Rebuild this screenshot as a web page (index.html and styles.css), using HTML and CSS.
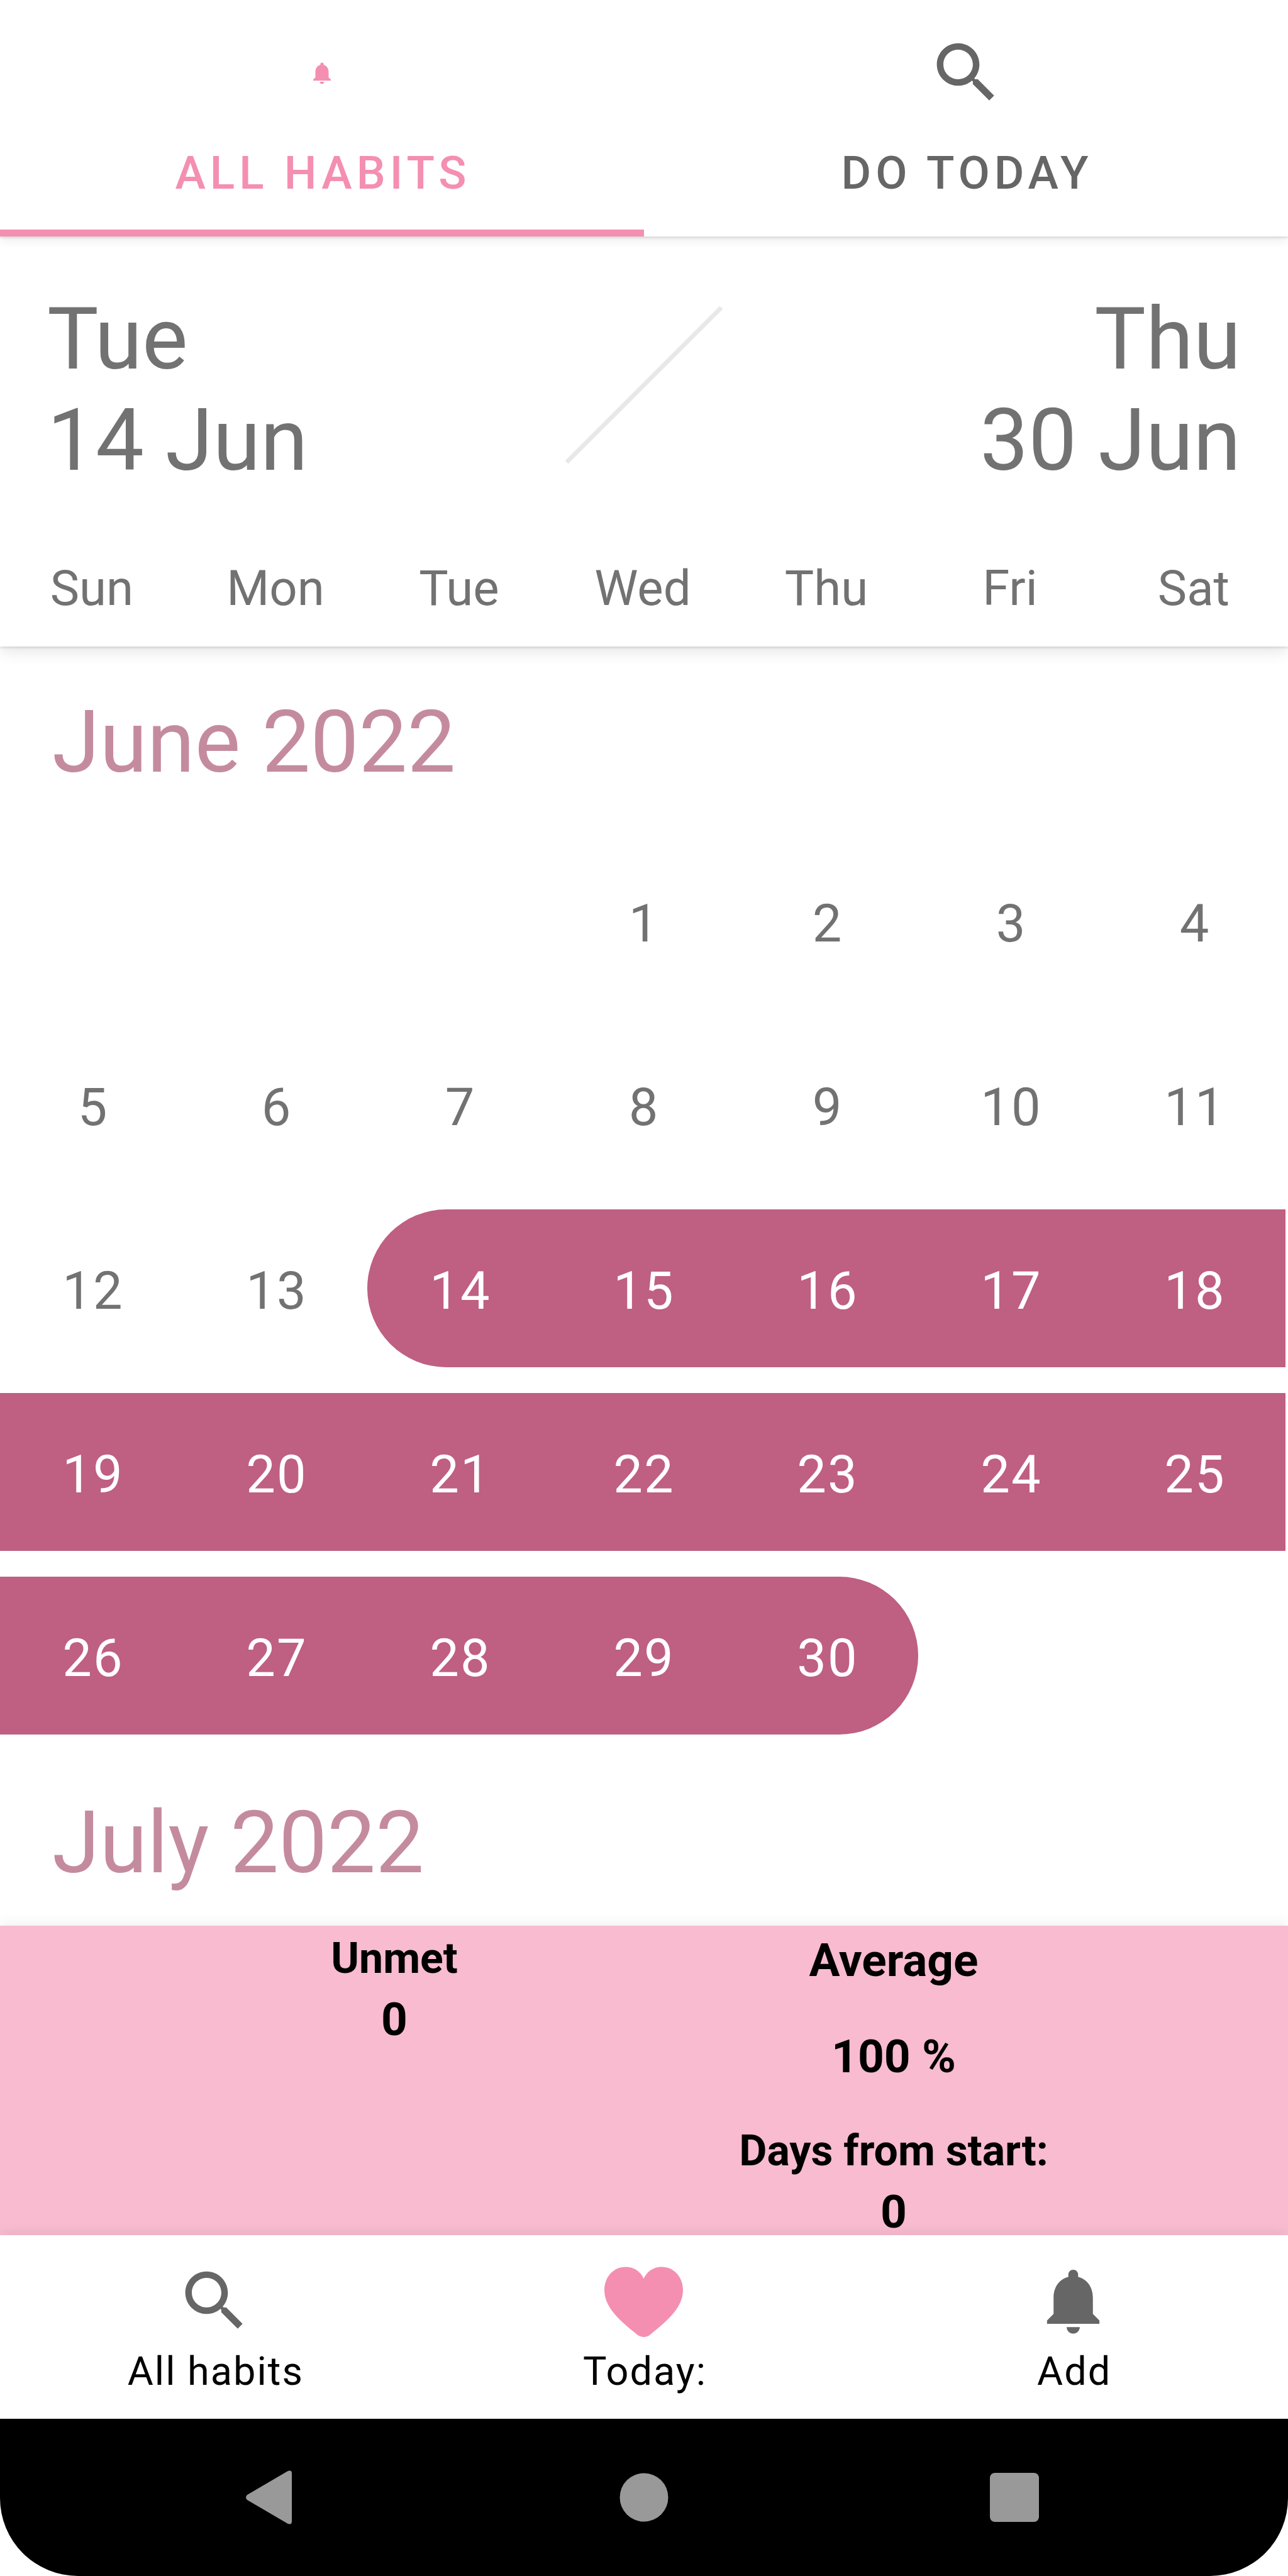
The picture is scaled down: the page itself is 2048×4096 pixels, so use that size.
FILE: index.html
```html
<!DOCTYPE html>
<html lang="en">
<head>
<meta charset="utf-8">
<meta name="viewport" content="width=device-width, initial-scale=1">
<title>Habits</title>
<link rel="stylesheet" href="styles.css">
</head>
<body>
<svg class="sprite" aria-hidden="true">
  <symbol id="bell" viewBox="0 0 24 24"><path d="M12 22c1.1 0 2-.9 2-2h-4c0 1.1.89 2 2 2zm6-6v-5c0-3.07-1.64-5.64-4.5-6.32V4c0-.83-.67-1.5-1.5-1.5s-1.5.67-1.5 1.5v.68C7.63 5.36 6 7.92 6 11v5l-2 2v1h16v-1l-2-2z"/></symbol>
  <symbol id="search" viewBox="0 0 24 24"><path d="M15.5 14h-.79l-.28-.27C15.41 12.59 16 11.11 16 9.5 16 5.91 13.09 3 9.5 3S3 5.91 3 9.5 5.91 16 9.5 16c1.61 0 3.09-.59 4.23-1.57l.27.28v.79l5 4.99L20.49 19l-4.99-5zm-6 0C7.01 14 5 11.99 5 9.5S7.01 5 9.5 5 14 7.01 14 9.5 11.99 14 9.5 14z"/></symbol>
  <symbol id="heart" viewBox="0 0 24 24"><path d="M12 5.25C11 3 9 1.63 6.5 1.63C2.8 1.63 0 4.7 0 8.7C0 13.6 4 17.6 9.9 22.2C11.2 23.3 12.8 23.3 14.1 22.2C20 17.6 24 13.6 24 8.7C24 4.7 21.2 1.63 17.5 1.63C15 1.63 13 3 12 5.25z"/></symbol>
</svg>
<div class="app">
  <nav class="tabs" aria-label="Views">
    <button class="tab tab-active" type="button">
      <span class="icon-box"><svg class="icon-small"><use href="#bell"/></svg></span>
      <span class="tab-label">ALL HABITS</span>
    </button>
    <button class="tab" type="button">
      <span class="icon-box"><svg class="icon"><use href="#search"/></svg></span>
      <span class="tab-label">DO TODAY</span>
    </button>
  </nav>

  <header class="range">
    <div class="range-dates">
      <div class="range-date">Tue<br>14 Jun</div>
      <svg class="range-slash" viewBox="0 0 250 250"><path d="M2 248L248 2"/></svg>
      <div class="range-date range-end">Thu<br>30 Jun</div>
    </div>
    <div class="weekdays">
      <span>Sun</span><span>Mon</span><span>Tue</span><span>Wed</span><span>Thu</span><span>Fri</span><span>Sat</span>
    </div>
  </header>

  <main class="calendar">
    <h2 class="month">June 2022</h2>
    <div class="days">
      <button class="day first-wed" type="button">1</button>
      <button class="day" type="button">2</button>
      <button class="day" type="button">3</button>
      <button class="day" type="button">4</button>
      <button class="day" type="button">5</button>
      <button class="day" type="button">6</button>
      <button class="day" type="button">7</button>
      <button class="day" type="button">8</button>
      <button class="day" type="button">9</button>
      <button class="day" type="button">10</button>
      <button class="day" type="button">11</button>
      <button class="day" type="button">12</button>
      <button class="day" type="button">13</button>
      <button class="day selected start" type="button">14</button>
      <button class="day selected" type="button">15</button>
      <button class="day selected" type="button">16</button>
      <button class="day selected" type="button">17</button>
      <button class="day selected" type="button">18</button>
      <button class="day selected" type="button">19</button>
      <button class="day selected" type="button">20</button>
      <button class="day selected" type="button">21</button>
      <button class="day selected" type="button">22</button>
      <button class="day selected" type="button">23</button>
      <button class="day selected" type="button">24</button>
      <button class="day selected" type="button">25</button>
      <button class="day selected" type="button">26</button>
      <button class="day selected" type="button">27</button>
      <button class="day selected" type="button">28</button>
      <button class="day selected" type="button">29</button>
      <button class="day selected end" type="button">30</button>
    </div>
    <h2 class="month">July 2022</h2>
  </main>

  <section class="stats">
    <div class="stats-column">
      <div class="stat-pair">
        <span class="stat-name">Unmet</span>
        <span class="stat-value">0</span>
      </div>
    </div>
    <div class="stats-column stats-main">
      <span class="stat-large">Average</span>
      <span class="stat-large">100 %</span>
      <div class="stat-pair">
        <span class="stat-name">Days from start:</span>
        <span class="stat-value">0</span>
      </div>
    </div>
  </section>

  <nav class="bottom-nav" aria-label="Main">
    <button class="nav-item" type="button"><svg class="icon"><use href="#search"/></svg><span class="nav-label">All habits</span></button>
    <button class="nav-item" type="button"><svg class="icon icon-pink"><use href="#heart"/></svg><span class="nav-label">Today:</span></button>
    <button class="nav-item" type="button"><svg class="icon"><use href="#bell"/></svg><span class="nav-label">Add</span></button>
  </nav>

  <div class="system-bar">
    <button class="system-button" type="button" aria-label="Back"><svg viewBox="0 0 96 96"><path d="M6 44L70 6.500Q77 3.500 77 10V86Q77 92.500 70 89.500L6 52Q2 48 6 44z"/></svg></button>
    <button class="system-button" type="button" aria-label="Home"><svg viewBox="0 0 96 96"><circle cx="48" cy="48" r="38.500"/></svg></button>
    <button class="system-button" type="button" aria-label="Recent apps"><svg viewBox="0 0 96 96"><rect x="9" y="9" width="78" height="78" rx="8"/></svg></button>
  </div>
</div>
</body>
</html>
```

FILE: styles.css
```css
* {
  box-sizing: border-box;
}

body {
  margin: 0;
  background: #fff;
  color: #000;
  font-family: Roboto, "Liberation Sans", sans-serif;
}

button {
  margin: 0;
  padding: 0;
  border: 0;
  background: none;
  color: inherit;
  font: inherit;
}

.sprite {
  display: none;
}

.app {
  display: flex;
  flex-direction: column;
  min-height: 100vh;
}

.icon {
  width: 125px;
  height: 125px;
  fill: #666;
}

.icon-small {
  width: 42px;
  height: 42px;
  fill: #f48fb1;
}

.icon-pink {
  fill: #f48fb1;
}

/* Top tabs */
.tabs {
  position: relative;
  z-index: 2;
  display: grid;
  grid-template-columns: 1fr 1fr;
  background: #fff;
  box-shadow: 0 2px 4px rgba(0, 0, 0, 0.12), 0 6px 16px rgba(0, 0, 0, 0.08);
}

.tab {
  display: flex;
  flex-direction: column;
  align-items: center;
  gap: 54px;
  padding: 53px 0 47px;
  border-bottom: 11px solid transparent;
  color: #666;
}

.tab-active {
  border-bottom-color: #f48fb1;
  color: #f48fb1;
}

.icon-box {
  display: flex;
  align-items: center;
  justify-content: center;
  height: 125px;
}

.tab-label {
  padding-left: 3px;
  font-size: 73px;
  font-weight: 500;
  line-height: 86px;
  letter-spacing: 7px;
}

/* Selected range */
.range {
  position: relative;
  z-index: 1;
  padding: 83px 0 46px;
  background: #fff;
  color: #727272;
  box-shadow: 0 2px 4px rgba(0, 0, 0, 0.12), 0 8px 24px rgba(0, 0, 0, 0.1);
}

.range-dates {
  display: grid;
  grid-template-columns: 1fr auto 1fr;
  align-items: start;
  padding: 0 75px;
}

.range-date {
  font-size: 137px;
  line-height: 161px;
}

.range-end {
  text-align: right;
}

.range-slash {
  width: 250px;
  height: 250px;
  margin-top: 28px;
  fill: none;
  stroke: #e8e8e8;
  stroke-width: 7;
}

.weekdays {
  display: grid;
  grid-template-columns: repeat(7, 1fr);
  margin-top: 109px;
  padding-right: 4px;
  font-size: 78px;
  line-height: 92px;
  text-align: center;
}

/* Calendar */
.calendar {
  flex: 1 1 0;
  min-height: 0;
  overflow: hidden;
}

.month {
  margin: 0;
  padding: 72px 83px 58px;
  color: #c48b9f;
  font-size: 137px;
  font-weight: 400;
  line-height: 160px;
}

.days {
  display: grid;
  grid-template-columns: repeat(7, 1fr);
  row-gap: 41px;
  padding: 21px 4px 20px 0;
}

.day {
  height: 251px;
  padding: 7px 0 0 4px;
  color: #727272;
  font-size: 83px;
  letter-spacing: 2px;
}

.first-wed {
  grid-column-start: 4;
}

.selected {
  background: #bf5f82;
  color: #fff;
}

.start {
  border-radius: 126px 0 0 126px;
}

.end {
  border-radius: 0 126px 126px 0;
}

/* Statistics */
.stats {
  position: relative;
  display: grid;
  grid-template-columns: 1fr 1fr;
  padding: 12px 230px 0;
  background: #f8bbd0;
  box-shadow: 0 -2px 20px rgba(0, 0, 0, 0.08);
  font-weight: 700;
  text-align: center;
}

.stats-column,
.stat-pair {
  display: flex;
  flex-direction: column;
}

.stats-main {
  gap: 67px;
}

.stat-pair {
  gap: 20px;
}

.stat-name {
  font-size: 68px;
  line-height: 80px;
}

.stat-value {
  font-size: 73px;
  line-height: 74px;
}

.stat-large {
  font-size: 73px;
  line-height: 86px;
}

/* Bottom navigation */
.bottom-nav {
  position: relative;
  display: grid;
  grid-template-columns: repeat(3, 1fr);
  background: #fff;
  box-shadow: 0 -2px 20px rgba(0, 0, 0, 0.08);
}

.nav-item {
  display: flex;
  flex-direction: column;
  align-items: center;
  gap: 13px;
  padding: 42px 0 38px;
}

.nav-label {
  padding-left: 3px;
  font-size: 63px;
  line-height: 74px;
  letter-spacing: 2px;
}

/* System bar */
.system-bar {
  position: relative;
  display: grid;
  grid-template-columns: repeat(3, 1fr);
  padding: 77px 140px;
  border-radius: 0 0 124px 124px;
  background: #000;
}

.system-button {
  display: flex;
  justify-content: center;
}

.system-button svg {
  width: 96px;
  height: 96px;
  fill: #999;
}
```
